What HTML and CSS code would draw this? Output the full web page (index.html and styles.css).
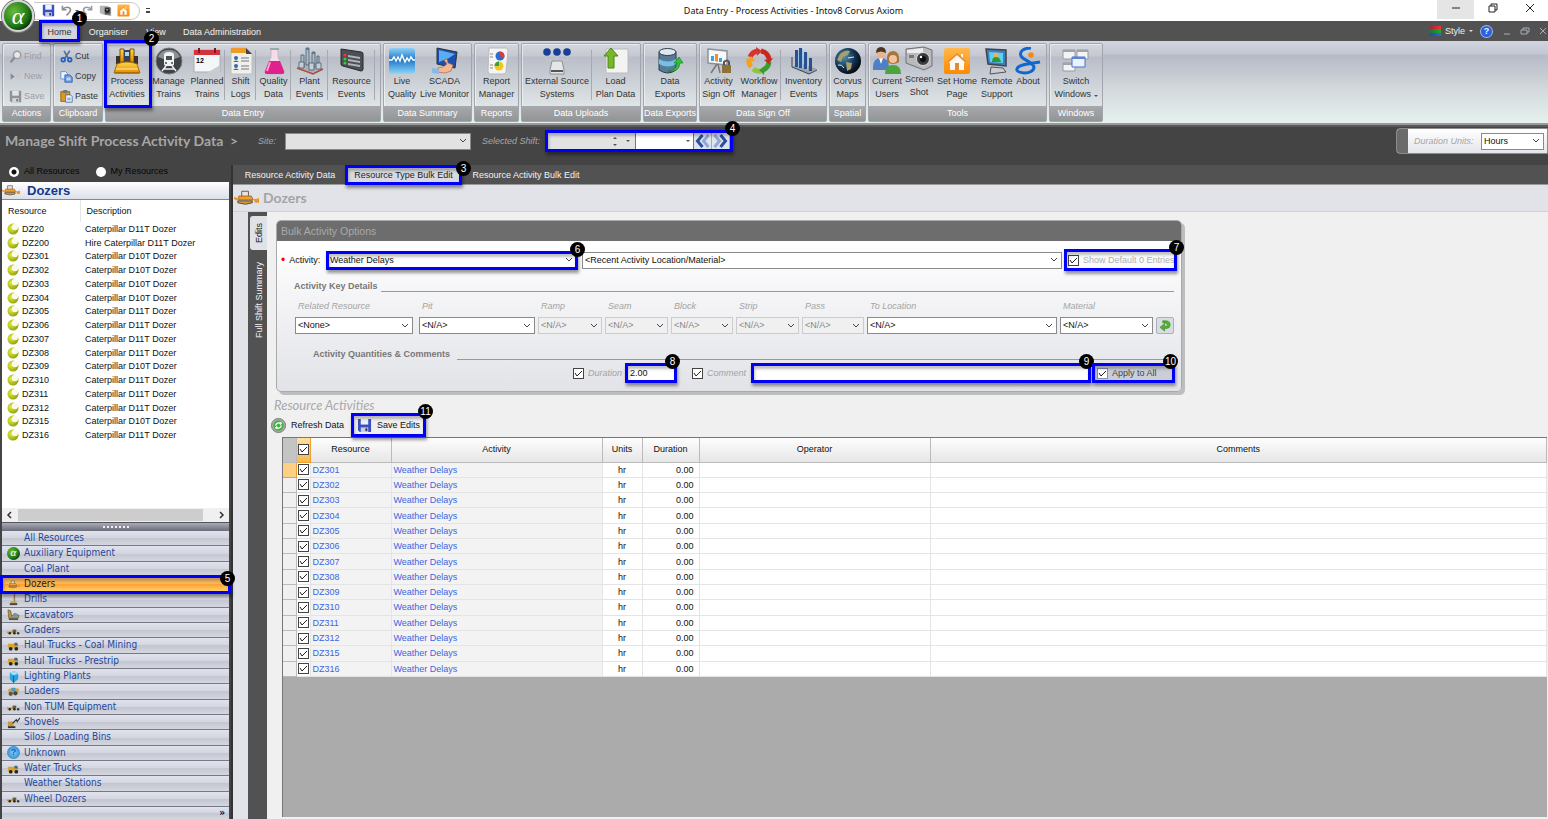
FILE: index.html
```html
<!DOCTYPE html>
<html lang="en">
<head>
    <meta charset="UTF-8">
    <meta name="viewport" content="width=device-width, initial-scale=1.0">
    <title>Data Entry - Process Activities - Intov8 Corvus Axiom</title>
    <link rel="stylesheet" href="styles.css">
</head>
<body>

<svg class="defs" width="0" height="0" aria-hidden="true">
    <defs>
        <linearGradient id="gold" x1="0" y1="0" x2="0" y2="1"><stop offset="0" stop-color="#ffd84a"/><stop offset="1" stop-color="#e58a00"/></linearGradient>
        <linearGradient id="sky" x1="0" y1="0" x2="0" y2="1"><stop offset="0" stop-color="#8fd0f5"/><stop offset=".45" stop-color="#1e78c8"/><stop offset="1" stop-color="#8fd6f8"/></linearGradient>
        <linearGradient id="orange" x1="0" y1="0" x2="0" y2="1"><stop offset="0" stop-color="#ffb84d"/><stop offset="1" stop-color="#ff8a00"/></linearGradient>
        <radialGradient id="lime" cx=".35" cy=".4" r=".8"><stop offset="0" stop-color="#e6ec3c"/><stop offset="1" stop-color="#7f9400"/></radialGradient>
        <radialGradient id="earth" cx=".35" cy=".35" r=".7"><stop offset="0" stop-color="#4b90b8"/><stop offset=".6" stop-color="#12304f"/><stop offset="1" stop-color="#05080d"/></radialGradient>
    </defs>
    <symbol id="i-floppy" viewBox="0 0 16 16"><path d="M1 1h14v14H3l-2-2z" fill="#3c4fc0"/><path d="M4 1h8v6H4z" fill="#eef2ff"/><path d="M4 10h8v5H4z" fill="#c9cfe0"/><path d="M9 11h2v3H9z" fill="#25306f"/></symbol>
    <symbol id="i-floppygrey" viewBox="0 0 16 16"><path d="M1 1h14v14H3l-2-2z" fill="#8f9297"/><path d="M4 1h8v6H4z" fill="#e2e4e8"/><path d="M4 10h8v5H4z" fill="#d4d6d9"/><path d="M9 11h2v3H9z" fill="#777"/></symbol>
    <symbol id="i-undo" viewBox="0 0 16 16"><path d="M3 2v5h5M3 7c3-4 9-4 10 0 0 3-3 5-5 7" fill="none" stroke="#8c8c92" stroke-width="2"/></symbol>
    <symbol id="i-redo" viewBox="0 0 16 16"><path d="M13 2v5H8M13 7C10 3 4 3 3 7c0 3 2 4 4 6" fill="none" stroke="#9a9aa0" stroke-width="2"/></symbol>
    <symbol id="i-shot" viewBox="0 0 16 16"><path d="M1 2h9l5 3v10L5 13 1 11z" fill="#b5b5b5"/><path d="M7 4h7v9H7z" fill="#5a5a5a"/><circle cx="10" cy="8" r="3" fill="#222"/><circle cx="10" cy="7" r="1" fill="#ddd"/></symbol>
    <symbol id="i-home" viewBox="0 0 28 28"><rect x="1" y="1" width="26" height="26" rx="2" fill="url(#orange)"/><path d="M6 15l8-7 8 7-1 1v7H7v-7z" fill="#fff8ee"/><path d="M5 15l9-8 9 8" fill="none" stroke="#e88a3a" stroke-width="1.5"/><path d="M18 7h2v4l-2-2z" fill="#fff"/><path d="M12 16h4v7h-4z" fill="#d88c44"/></symbol>
    <symbol id="i-find" viewBox="0 0 16 16"><circle cx="10" cy="6" r="4.5" fill="#e8e8ea" stroke="#9c9ea4" stroke-width="2"/><path d="M7 9l-5 6" stroke="#8a8c92" stroke-width="3"/></symbol>
    <symbol id="i-new" viewBox="0 0 16 16"><path d="M2 4l5 4-5 4z" fill="#8a8c92"/><path d="M9 6h5M9 9h5" stroke="#c4c6ca" stroke-width="2"/></symbol>
    <symbol id="i-cut" viewBox="0 0 16 16"><path d="M5 1l5 9M12 1L6 10" stroke="#4d6f9e" stroke-width="2"/><circle cx="4" cy="12" r="2.3" fill="none" stroke="#1f5fc0" stroke-width="2"/><circle cx="12" cy="12" r="2.3" fill="none" stroke="#1f5fc0" stroke-width="2"/></symbol>
    <symbol id="i-copy" viewBox="0 0 16 16"><path d="M1 2h6l2 2v7H1z" fill="#eaf2ff" stroke="#5a86c8"/><path d="M6 6h6l3 3v6H6z" fill="#6d9fe6" stroke="#2a5cae"/><path d="M8 10h5M8 12h5" stroke="#fff"/></symbol>
    <symbol id="i-paste" viewBox="0 0 16 16"><path d="M1 2h11v12H1z" fill="#d99a1f" stroke="#8a5a0a"/><path d="M4 0h5v4H4z" fill="#777"/><path d="M7 6h6l2 2v7H7z" fill="#eef4ff" stroke="#3a66aa"/><path d="M9 10h4M9 12h4" stroke="#4a7ac0"/></symbol>
    <symbol id="i-process" viewBox="0 0 28 28"><path d="M7 2h4v13H7zM17 2h4v13h-4z" fill="url(#gold)" stroke="#7a5200"/><path d="M11 3h6v12h-6z" fill="#33435b"/><path d="M12 5h4v4h-4z" fill="#b3d5ef"/><path d="M3 9h4v8H3zM21 9h4v8h-4z" fill="#3a3226"/><path d="M4 17q10-4 20 0l3 9H1z" fill="url(#gold)" stroke="#a96e00"/><path d="M3 22h22" stroke="#fff0a0"/><path d="M2 26h24" stroke="#9c5b00"/></symbol>
    <symbol id="i-train" viewBox="0 0 28 28"><circle cx="14" cy="14" r="13" fill="#3f4246" stroke="#777b80"/><path d="M3 10a12 12 0 0 1 22 0q-11 5-22 0z" fill="#8c9196"/><path d="M9 8q0-3 5-3t5 3v9q0 2-2 2h-6q-2 0-2-2z" fill="#f2f2f2"/><path d="M11 9h6v4h-6z" fill="#4b4e52"/><circle cx="11" cy="16" r="1" fill="#444"/><circle cx="17" cy="16" r="1" fill="#444"/><path d="M11 19l-4 5M17 19l4 5M9 22h10" stroke="#eee" stroke-width="1.5"/></symbol>
    <symbol id="i-log" viewBox="0 0 28 28"><path d="M4 1h15l6 6v20H4z" fill="#f2f0ea" stroke="#c0beb8"/><path d="M4 1h15v5H4z" fill="#f09a28"/><path d="M19 1l6 6h-6z" fill="#444"/><circle cx="9" cy="11" r="2" fill="#2e6ca8"/><circle cx="9" cy="19" r="2" fill="#2e6ca8"/><path d="M6 15q3-3 6 0zM6 23q3-3 6 0z" fill="#2e6ca8"/><path d="M14 11h8M14 14h8M14 19h8M14 22h8" stroke="#9aa0a8" stroke-width="1.5"/></symbol>
    <symbol id="i-flask" viewBox="0 0 28 28"><path d="M11 2h7v8l6 14q1 3-2 3H7q-3 0-2-3l6-14z" fill="#f6dcea" stroke="#c6b6c4"/><path d="M9 14h11l4 10q1 3-2 3H7q-3 0-2-3z" fill="#e0208c"/><path d="M10 15l-3 9" stroke="#ff9cd2" stroke-width="2"/><path d="M10 2h9" stroke="#9aa" stroke-width="2"/></symbol>
    <symbol id="i-plant" viewBox="0 0 28 28"><path d="M1 20l10-5 16 7-10 5z" fill="#a9b0b6"/><path d="M5 8h3v12H5zM10 1h3v17h-3zM16 5h3v15h-3zM21 9h2v12h-2z" fill="#a9bccb" stroke="#4b5a68" stroke-width=".8"/><path d="M10 1h3v2h-3zM16 5h3v2h-3z" fill="#5c7894"/><path d="M3 15h5v6H3zM13 16h5v7h-5zM20 16h5v6h-5z" fill="#c3d0da" stroke="#4b5a68" stroke-width=".8"/><path d="M1 21l16 6 10-5" fill="none" stroke="#b5483a" stroke-width="1.5"/></symbol>
    <symbol id="i-resource" viewBox="0 0 28 28"><path d="M3 2l20 3q2 0 2 2v15q0 2-2 2L5 19q-2 0-2-2z" fill="#4c4f54" stroke="#26282b"/><path d="M10 8l12 2v2l-12-2zM10 12l12 2v2l-12-2zM10 16l12 2v2l-12-2z" fill="#b0b4ba"/><circle cx="7" cy="8" r="1.6" fill="#e33"/><circle cx="7" cy="12" r="1.6" fill="#3c3"/><circle cx="7" cy="16" r="1.6" fill="#3c3"/></symbol>
    <symbol id="i-live" viewBox="0 0 28 28"><rect x="1" y="1" width="26" height="26" rx="3" fill="url(#sky)"/><path d="M1 13h3l2-3 2 4 2-4 2 4 2-6 3 7 2-4 2 3 2-4 2 3h2" fill="none" stroke="#fff" stroke-width="1.4"/></symbol>
    <symbol id="i-scada" viewBox="0 0 28 28"><path d="M6 1l20 4-2 16-18-4z" fill="#1c4fae" stroke="#333"/><path d="M8 3l16 4-6 4-10 4z" fill="#58aef0"/><path d="M13 13l3-1 1 4 5 2-2 6-6 2-8-1 1-4 5-1 4-3z" fill="#f3b893" stroke="#b06a4a" stroke-width=".7"/><path d="M1 21l7 1v5l-7-1z" fill="#88b9e6"/></symbol>
    <symbol id="i-report" viewBox="0 0 28 28"><path d="M6 1h17q2 0 2 3l-2 21q0 2-3 2H7q-2 0-2-3z" fill="#f4f4f4" stroke="#b9b9b9"/><circle cx="17" cy="9" r="4.5" fill="#2a6cd0"/><path d="M17 9V4.5a4.5 4.5 0 0 1 4 6.5z" fill="#e23a2c"/><circle cx="16" cy="19" r="4.5" fill="#f3c620"/><path d="M16 19h-4.5a4.5 4.5 0 0 1 4.5-4.5z" fill="#35a33c"/><path d="M7 7h3M7 10h3M7 18h3M7 21h3" stroke="#888"/></symbol>
    <symbol id="i-external" viewBox="0 0 28 28"><g fill="#173f97"><circle cx="4" cy="5" r="3.8"/><circle cx="14" cy="5" r="3.8"/><circle cx="24" cy="5" r="3.8"/></g><path d="M3 10v3h22v-3M14 9v6" fill="none" stroke="#c4c7cc"/><path d="M9 14h10l2 9v4H7v-4z" fill="#e4e6e8" stroke="#8c9096"/><path d="M8 24h12" stroke="#555" stroke-width="2"/></symbol>
    <symbol id="i-load" viewBox="0 0 28 28"><path d="M4 2h22v24H4z" fill="#f3f3f3" stroke="#b9bcc0"/><path d="M9 1l7 8h-4v12H6V9H2z" fill="#76b82a" stroke="#4d8412"/></symbol>
    <symbol id="i-export" viewBox="0 0 28 28"><path d="M3 5v18q9 6 17 0V5z" fill="#557a9a" stroke="#2a3c4c"/><ellipse cx="11.5" cy="5" rx="8.5" ry="3.5" fill="#dfe7ee" stroke="#2a3c4c"/><path d="M3 12q9 5 17 0v5q-8 5-17 0z" fill="#79bfe4"/><path d="M12 24q8 0 9-8h-3l5-6 4 6h-3q-1 10-12 8z" fill="#2fbf3c" stroke="#137a20" stroke-width=".6"/></symbol>
    <symbol id="i-signoff" viewBox="0 0 28 28"><path d="M3 2l19 2v14L3 16z" fill="#f6f8fa" stroke="#8c9298" stroke-width="1.5"/><path d="M6 14V9h3v5zM14 15v-4h3v4z" fill="#3f9fe0"/><path d="M10 14V7h3v8z" fill="#ef8e2d"/><path d="M12 17l-6 9M13 17l2 9" stroke="#777" stroke-width="1.5"/><path d="M17 18h9v8h-9z" fill="#8c7238"/><path d="M19 18v-3q3-3 5 0v3" fill="none" stroke="#555" stroke-width="2"/></symbol>
    <symbol id="i-workflow" viewBox="0 0 28 28"><g fill="none" stroke-width="5"><path d="M5 10a10 10 0 0 1 8-6" stroke="#d8342a"/><path d="M16 4a10 10 0 0 1 8 8" stroke="#c8281e"/><path d="M24 15a10 10 0 0 1-6 8" stroke="#3b9c2f"/><path d="M16 24a10 10 0 0 1-8-2" stroke="#8cc63e"/><path d="M6 20a10 10 0 0 1-2-8" stroke="#f5a11c"/></g><path d="M11 0l6 4-5 5z" fill="#d8342a"/><path d="M28 11l-4 6-5-4z" fill="#c8281e"/><path d="M20 19l-1 9-5-5z" fill="#3b9c2f"/><path d="M1 15l5-6 4 5z" fill="#f5a11c"/></symbol>
    <symbol id="i-inventory" viewBox="0 0 28 28"><path d="M2 20l8-4 17 6-8 5z" fill="#9aa3ad"/><path d="M5 3h3v17H5zM9 1h3v20H9zM14 5h3v17h-3zM19 11h3v13h-3z" fill="#29508f"/><path d="M8 4h1v16H8zM12 2h1v19h-1zM17 6h1v17h-1z" fill="#9ec4ec"/><path d="M2 10v10l17 7 8-4" fill="none" stroke="#3c444c"/></symbol>
    <symbol id="i-earth" viewBox="0 0 28 28"><circle cx="14" cy="14" r="13" fill="url(#earth)"/><path d="M6 7q5-5 10-3l-2 4-5 2-2 5-4-2zM12 15l6 1-1 6-4 2z" fill="#a89f6c"/><path d="M4 18q4-1 6 3M14 11l6-1" stroke="#dfe8ee" fill="none"/></symbol>
    <symbol id="i-users" viewBox="0 0 28 28"><path d="M0 20q0-9 8-9t8 9v3H0z" fill="#4f7fc4"/><path d="M6 11l2 6 2-6z" fill="#fff"/><circle cx="8" cy="7" r="4.5" fill="#e8b48c"/><path d="M3 6q0-6 5-6t5 6q-5-3-10 0z" fill="#4a3424"/><path d="M12 27q0-9 8-9t8 9z" fill="#49a53c"/><path d="M14 15q-1-11 6-11t6 11q-6 4-12 0z" fill="#a8743c"/><circle cx="20" cy="12" r="4" fill="#f0c49c"/></symbol>
    <symbol id="i-camera" viewBox="0 0 28 28"><path d="M1 4l18-2 8 3v16l-8 4-18-7z" fill="#b8babd" stroke="#6e7073"/><path d="M2 5l16-2v5L2 8z" fill="#eceded"/><circle cx="18" cy="14" r="6.5" fill="#3a3c3f" stroke="#ddd"/><circle cx="18" cy="14" r="3" fill="#0c0c0c"/><circle cx="16" cy="12" r="1.2" fill="#fff"/><path d="M4 10h5v3H4z" fill="#777"/></symbol>
    <symbol id="i-remote" viewBox="0 0 28 28"><path d="M4 2l20 1v16L6 17z" fill="#3b7fc4" stroke="#444" stroke-width="1.5"/><path d="M7 5l14 1v10L8 15z" fill="#5fd0f0"/><circle cx="14" cy="8" r="2.5" fill="#e8b060"/><path d="M10 15q0-5 4-5t5 5z" fill="#2f9a2a"/><path d="M9 20l12 1 3 4-16 2z" fill="#c9ccd0" stroke="#555"/></symbol>
    <symbol id="i-about" viewBox="0 0 28 28"><path d="M17 1C10 1 5 4 7 9c2 4 12 6 13 11 0 4-5 6-9 6-5 0-9-2-8-4 1-5 13-5 23-7" fill="none" stroke="#1267cf" stroke-width="3"/><circle cx="17" cy="8" r="2.8" fill="#f08a1a"/></symbol>
    <symbol id="i-windows" viewBox="0 0 28 28"><path d="M1 3h12v9H1zM15 3h11v9H15zM1 16h12v8H1z" fill="#f3f4f6" stroke="#989ba2"/><path d="M1 3h12v2H1zM15 3h11v2H15zM1 16h12v2H1z" fill="#a0a3a9"/><path d="M10 10h13v10H10z" fill="#eaf2ff" stroke="#4a74c4"/><path d="M10 10h13v2H10z" fill="#5a84d4"/></symbol>
    <symbol id="i-dozer" viewBox="0 0 26 16"><path d="M8 1h7v6H8z" fill="#e4e4e4" stroke="#6a5a48"/><path d="M5 6h13l2 4H5z" fill="#f0a030" stroke="#a86a18"/><path d="M4 11h15v2q-7 3-15 0z" fill="#d8963a" stroke="#5c5040"/><path d="M0 7l4 1v3l-4-2zM20 9h3l3-1v5h-4z" fill="#e8962a"/></symbol>
    <symbol id="i-ball" viewBox="0 0 12 12"><circle cx="6" cy="6" r="5.5" fill="url(#lime)"/><circle cx="8" cy="4" r="3.2" fill="#fff" opacity=".9"/></symbol>
    <symbol id="i-vehicle" viewBox="0 0 14 14"><path d="M1 5h8l3 2v3H1z" fill="#dba52a"/><path d="M8 4h3l1 3H8z" fill="#3d6a8a"/><circle cx="4" cy="10.5" r="2" fill="#222"/><circle cx="10" cy="10.5" r="2" fill="#222"/></symbol>
    <symbol id="i-flat" viewBox="0 0 14 14"><path d="M0 8h9v2H0z" fill="#c89a38"/><path d="M6 6h4v3H6z" fill="#6a5a36"/><circle cx="3" cy="10" r="1.3" fill="#222"/><circle cx="8" cy="10" r="1.3" fill="#222"/><circle cx="12" cy="10" r="1.3" fill="#333"/></symbol>
    <symbol id="i-digger" viewBox="0 0 14 14"><path d="M1 2l3 1 1 6 3-3 5 2-1 3H2z" fill="#b9964a" stroke="#5e5030" stroke-width=".7"/><path d="M7 6h4v3H7z" fill="#5a9ac0"/><path d="M2 11h10v2H2z" fill="#555"/></symbol>
    <symbol id="i-loader" viewBox="0 0 14 14"><path d="M1 5l4-2 8 1-1 5H2z" fill="#d0a438"/><path d="M5 3h4v4H5z" fill="#4a9ac8"/><circle cx="4" cy="9.500" r="2.300" fill="#555"/><circle cx="9" cy="9" r="2.300" fill="#444"/></symbol>
    <symbol id="i-shovel" viewBox="0 0 14 14"><path d="M1 6h6v5H1z" fill="#c89a38"/><path d="M6 8l4-4 1 2 3-4" fill="none" stroke="#333" stroke-width="1.3"/><path d="M1 11h8v2H1z" fill="#333"/></symbol>
    <symbol id="i-drill" viewBox="0 0 14 14"><path d="M8 0v10" stroke="#a08058" stroke-width="1.5"/><path d="M4 9h6l1 3H3z" fill="#c8a060"/><path d="M3 12h8" stroke="#444" stroke-width="2"/></symbol>
    <symbol id="i-cube" viewBox="0 0 14 14"><path d="M3 3l5-2 4 3v6l-5 4-4-4z" fill="#2aa0dc"/><path d="M3 3l5-2 4 3-5 2z" fill="#9ee0fa"/><path d="M7 6v8" stroke="#0d5e94"/></symbol>
    <symbol id="i-refresh" viewBox="0 0 16 16"><circle cx="8" cy="8" r="7.5" fill="#a9aba9" stroke="#777"/><circle cx="8" cy="8" r="5.5" fill="#48b048"/><path d="M5 8a3 3 0 0 1 5-2M11 8a3 3 0 0 1-5 2" fill="none" stroke="#eaffea" stroke-width="1.5"/><path d="M9 4l3 1-2 3zM7 12l-3-1 2-3z" fill="#eaffea"/></symbol>
    <symbol id="i-return" viewBox="0 0 14 14"><path d="M4 2q8-1 8 4t-6 4v3L1 9l5-4v3q4 0 3-2t-5-2z" fill="#4fb52c" stroke="#2f7d18" stroke-width=".6"/></symbol>
</svg>

<div class="app">
    <header class="titlebar">
        <button class="orb" aria-label="Application menu">α</button>
        <div class="quick">
            <button aria-label="Save"><svg><use href="#i-floppy"/></svg></button>
            <button aria-label="Undo"><svg><use href="#i-undo"/></svg></button>
            <i class="caret"></i>
            <button aria-label="Redo"><svg><use href="#i-redo"/></svg></button>
            <button aria-label="Screen shot"><svg><use href="#i-shot"/></svg></button>
            <button aria-label="Home page"><svg><use href="#i-home"/></svg></button>
        </div>
        <span class="more"></span>
        <h1>Data Entry - Process Activities - Intov8 Corvus Axiom</h1>
        <div class="window-buttons">
            <button class="min" aria-label="Minimise"><svg viewBox="0 0 10 10"><path d="M1 5h8"/></svg></button>
            <button aria-label="Restore"><svg viewBox="0 0 10 10"><path d="M1 3h6v6H1zM3 3V1h6v6H7"/></svg></button>
            <button aria-label="Close"><svg viewBox="0 0 10 10"><path d="M1 1l8 8M9 1L1 9"/></svg></button>
        </div>
    </header>

    <nav class="menubar">
        <a class="home marked" href="#">Home<b class="mark"><i>1</i></b></a>
        <a class="organiser" href="#">Organiser</a>
        <a class="view" href="#">View</a>
        <a class="admin" href="#">Data Administration</a>
        <div class="menu-right">
            <span class="swatch"></span><button>Style</button><i class="caret"></i>
            <button class="help" aria-label="Help">?</button>
            <svg viewBox="0 0 10 10"><path d="M2 8h6"/></svg>
            <svg viewBox="0 0 10 10"><path d="M1 4h6v4H1zM3 4V2h6v4H7"/></svg>
            <svg viewBox="0 0 10 10"><path d="M2 2l6 6M8 2L2 8"/></svg>
        </div>
    </nav>

    <div class="ribbon">
        <section class="group actions">
            <div class="stack off">
                <button disabled><svg><use href="#i-find"/></svg>Find</button>
                <button disabled><svg><use href="#i-new"/></svg>New</button>
                <button disabled><svg><use href="#i-floppygrey"/></svg>Save</button>
            </div>
            <h2>Actions</h2>
        </section>
        <section class="group clipboard">
            <div class="stack">
                <button><svg><use href="#i-cut"/></svg>Cut</button>
                <button><svg><use href="#i-copy"/></svg>Copy</button>
                <button><svg><use href="#i-paste"/></svg>Paste</button>
            </div>
            <h2>Clipboard</h2>
        </section>
        <section class="group entry">
            <div class="tools">
                <button class="marked"><svg><use href="#i-process"/></svg>Process<br>Activities<b class="mark"><i>2</i></b></button>
                <button><svg><use href="#i-train"/></svg>Manage<br>Trains</button>
                <button class="sep"><svg viewBox="0 0 28 28"><path d="M1 3h26v22H1z" fill="#f5f6f8" stroke="#a9adb3"/><path d="M1 3h26v5H1z" fill="#d5333c"/><path d="M6 1v5M22 1v5" stroke="#7c1820" stroke-width="2"/><path d="M27 18v8H14z" fill="#c9ccd2"/><text x="3" y="16" font-size="7" font-weight="700">12</text></svg>Planned<br>Trains</button>
                <button class="sep"><svg><use href="#i-log"/></svg>Shift<br>Logs</button>
                <button class="sep"><svg><use href="#i-flask"/></svg>Quality<br>Data</button>
                <button class="sep"><svg><use href="#i-plant"/></svg>Plant<br>Events</button>
                <button class="sep"><svg><use href="#i-resource"/></svg>Resource<br>Events</button>
            </div>
            <h2>Data Entry</h2>
        </section>
        <section class="group summary">
            <div class="tools">
                <button><svg><use href="#i-live"/></svg>Live<br>Quality</button>
                <button><svg><use href="#i-scada"/></svg>SCADA<br>Live Monitor</button>
            </div>
            <h2>Data Summary</h2>
        </section>
        <section class="group reports">
            <div class="tools"><button><svg><use href="#i-report"/></svg>Report<br>Manager</button></div>
            <h2>Reports</h2>
        </section>
        <section class="group uploads">
            <div class="tools">
                <button class="sep"><svg><use href="#i-external"/></svg>External Source<br>Systems</button>
                <button><svg><use href="#i-load"/></svg>Load<br>Plan Data</button>
            </div>
            <h2>Data Uploads</h2>
        </section>
        <section class="group exports">
            <div class="tools"><button><svg><use href="#i-export"/></svg>Data<br>Exports</button></div>
            <h2>Data Exports</h2>
        </section>
        <section class="group signoff">
            <div class="tools">
                <button><svg><use href="#i-signoff"/></svg>Activity<br>Sign Off</button>
                <button class="sep"><svg><use href="#i-workflow"/></svg>Workflow<br>Manager</button>
                <button><svg><use href="#i-inventory"/></svg>Inventory<br>Events</button>
            </div>
            <h2>Data Sign Off</h2>
        </section>
        <section class="group spatial">
            <div class="tools"><button><svg><use href="#i-earth"/></svg>Corvus<br>Maps</button></div>
            <h2>Spatial</h2>
        </section>
        <section class="group toolset">
            <div class="tools">
                <button><svg><use href="#i-users"/></svg>Current<br>Users</button>
                <button class="screen"><svg><use href="#i-camera"/></svg>Screen<br>Shot</button>
                <button><svg><use href="#i-home"/></svg>Set Home<br>Page</button>
                <button><svg><use href="#i-remote"/></svg>Remote<br>Support</button>
                <button><svg><use href="#i-about"/></svg>About<br>&nbsp;</button>
            </div>
            <h2>Tools</h2>
        </section>
        <section class="group windows">
            <div class="tools"><button><svg><use href="#i-windows"/></svg>Switch<br>Windows <i class="caret"></i></button></div>
            <h2>Windows</h2>
        </section>
    </div>

    <div class="filterbar">
        <h2>Manage Shift Process Activity Data &nbsp;&gt;</h2>
        <label for="site">Site:</label>
        <select id="site" class="site"><option></option></select>
        <label for="shift-date">Selected Shift:</label>
        <div class="shift marked">
            <input id="shift-date" type="text">
            <span class="spin"><i class="caret up"></i><i class="caret"></i></span>
            <span class="drop"><i class="caret"></i></span>
            <input class="shift-name" type="text" aria-label="Shift">
            <span class="drop white"><i class="caret"></i></span>
            <button aria-label="Previous shift"><svg viewBox="0 0 16 16"><path d="M8 2L3 8l5 6" stroke="#2a4f9e"/><path d="M14 2L9 8l5 6" stroke="#8fa8d8"/></svg></button>
            <button aria-label="Next shift"><svg viewBox="0 0 16 16"><path d="M2 2l5 6-5 6" stroke="#8fa8d8"/><path d="M8 2l5 6-5 6" stroke="#2a4f9e"/></svg></button>
            <b class="mark"><i>4</i></b>
        </div>
        <div class="units">
            <span class="grip"></span>
            <label for="units">Duration Units:</label>
            <select id="units"><option>Hours</option></select>
        </div>
    </div>

    <div class="workspace">
        <aside class="sidebar">
            <div class="scope">
                <label><input type="radio" name="scope" checked>All Resources</label>
                <label><input type="radio" name="scope">My Resources</label>
            </div>
            <h2><svg><use href="#i-dozer"/></svg>Dozers</h2>
            <div class="list">
                <table>
                    <thead><tr><th>Resource</th><th>Description</th></tr></thead>
                    <tbody id="resource-list"></tbody>
                </table>
                <div class="scroll"><svg viewBox="0 0 8 8"><path d="M5 1L2 4l3 3"/></svg><span></span><svg viewBox="0 0 8 8"><path d="M3 1l3 3-3 3"/></svg></div>
            </div>
            <div class="splitter"></div>
            <nav class="categories" id="categories"></nav>
        </aside>

        <main class="main">
            <div class="tabs">
                <button>Resource Activity Data</button>
                <button class="active marked">Resource Type Bulk Edit<b class="mark"><i>3</i></b></button>
                <button>Resource Activity Bulk Edit</button>
            </div>
            <h2 class="heading"><svg><use href="#i-dozer"/></svg>Dozers</h2>
            <div class="body">
                <div class="side-tabs">
                    <button class="active">Edits</button>
                    <button>Full Shift Summary</button>
                </div>
                <div class="content">
                    <section class="options">
                        <h3>Bulk Activity Options</h3>
                        <div class="row activity-row">
                            <label for="activity"><em>•</em> Activity:</label>
                            <span class="field activity marked"><select id="activity"><option>Weather Delays</option></select><b class="mark"><i>6</i></b></span>
                            <select class="recent" aria-label="Recent activity"><option>&lt;Recent Activity Location/Material&gt;</option></select>
                            <label class="defaults marked"><input type="checkbox" checked>Show Default 0 Entries<b class="mark"><i>7</i></b></label>
                        </div>
                        <h4>Activity Key Details</h4>
                        <div class="keys">
                            <label>Related Resource<select><option>&lt;None&gt;</option></select></label>
                            <label>Pit<select><option>&lt;N/A&gt;</option></select></label>
                            <label>Ramp<select disabled><option>&lt;N/A&gt;</option></select></label>
                            <label>Seam<select disabled><option>&lt;N/A&gt;</option></select></label>
                            <label>Block<select disabled><option>&lt;N/A&gt;</option></select></label>
                            <label>Strip<select disabled><option>&lt;N/A&gt;</option></select></label>
                            <label>Pass<select disabled><option>&lt;N/A&gt;</option></select></label>
                            <label>To Location<select><option>&lt;N/A&gt;</option></select></label>
                            <label>Material<select><option>&lt;N/A&gt;</option></select></label>
                            <button aria-label="Reset"><svg><use href="#i-return"/></svg></button>
                        </div>
                        <h4 class="quantities">Activity Quantities &amp; Comments</h4>
                        <div class="row quantity-row">
                            <label><input type="checkbox" checked>Duration</label>
                            <span class="field duration marked"><input type="text" value="2.00" aria-label="Duration"><b class="mark"><i>8</i></b></span>
                            <label><input type="checkbox" checked>Comment</label>
                            <span class="field comment marked"><input type="text" aria-label="Comment"><b class="mark"><i>9</i></b></span>
                            <label class="apply marked"><input type="checkbox" checked>Apply to All<b class="mark"><i>10</i></b></label>
                        </div>
                    </section>

                    <h3 class="activities-title">Resource Activities</h3>
                    <div class="grid-tools">
                        <button><svg><use href="#i-refresh"/></svg>Refresh Data</button>
                        <button class="save marked"><svg><use href="#i-floppy"/></svg>Save Edits<b class="mark"><i>11</i></b></button>
                    </div>
                    <div class="grid">
                        <table>
                            <thead>
                                <tr>
                                    <th class="c-row"></th>
                                    <th class="c-check"><input type="checkbox" checked aria-label="Select all"></th>
                                    <th class="c-resource">Resource</th>
                                    <th class="c-activity">Activity</th>
                                    <th class="c-units">Units</th>
                                    <th class="c-duration">Duration</th>
                                    <th class="c-operator">Operator</th>
                                    <th>Comments</th>
                                </tr>
                            </thead>
                            <tbody id="activity-rows"></tbody>
                        </table>
                    </div>
                </div>
            </div>
        </main>
    </div>
</div>

<script src="script.js"></script>
</body>
</html>
```
FILE: styles.css
```css
* {
    box-sizing: border-box;
}

body {
    margin: 0;
    font-family: "Liberation Sans", Arial, sans-serif;
    font-size: 9px;
    line-height: 13px;
    color: #111;
    background: #f0f0f0;
}

h1, h2, h3, h4 {
    margin: 0;
    font-weight: normal;
}

button, input, select {
    font: inherit;
    color: inherit;
    margin: 0;
    padding: 0;
    border: 0;
    border-radius: 0;
    background: none;
}

a {
    color: inherit;
    text-decoration: none;
}

.defs {
    position: absolute;
}

.app {
    display: flex;
    flex-direction: column;
    height: 100vh;
    overflow: hidden;
}

.caret {
    display: inline-block;
    border: 2px solid transparent;
    border-top-color: #555;
    border-bottom: 0;
}

.caret.up {
    border-top: 0;
    border-bottom: 2px solid #555;
}

/* numbered callouts */
.marked {
    position: relative;
}

.mark {
    position: absolute;
    inset: -1px;
    z-index: 5;
    border: 3px solid #0000fa;
    box-shadow: 1px 3px 3px rgba(0, 0, 0, 0.4), inset 1px 3px 3px rgba(0, 0, 0, 0.25);
    pointer-events: none;
}

.mark i {
    position: absolute;
    top: -12px;
    right: -10px;
    width: 15px;
    height: 15px;
    border-radius: 50%;
    background: #000;
    color: #fff;
    font: 10px/15px "Liberation Sans", Arial, sans-serif;
    text-align: center;
}

/* title bar */
.titlebar {
    display: flex;
    align-items: center;
    flex: none;
    height: 21px;
    background: #fff;
}

.orb {
    position: relative;
    z-index: 3;
    align-self: flex-start;
    flex: none;
    width: 32px;
    height: 32px;
    margin-left: 2px;
    border: 2px solid #d4d4d4;
    border-radius: 50%;
    background: radial-gradient(circle at 35% 35%, #6dbb3c, #1f7a18 55%, #0a2a08 80%);
    box-shadow: 0 0 0 1px #777;
    color: #fff;
    font: italic 24px/22px "Liberation Serif", serif;
}

.quick {
    display: flex;
    align-items: center;
    gap: 5px;
    height: 18px;
    padding: 0 9px 0 8px;
    border: 1px solid #c8c8c8;
    border-left: 0;
    border-radius: 0 9px 9px 0;
}

.quick button, .quick svg {
    display: block;
    width: 13px;
    height: 13px;
}

.quick .caret {
    margin: 0 -3px;
}

.more {
    width: 4px;
    height: 5px;
    margin-left: 6px;
    border-top: 1px solid #444;
    border-bottom: 2px solid #444;
}

.titlebar h1 {
    flex: 1;
    font: 9px/13px "Noto Sans", sans-serif;
    text-align: center;
}

.window-buttons {
    display: flex;
    align-self: stretch;
}

.window-buttons button {
    width: 37px;
    height: 19px;
}

.window-buttons .min {
    background: #e5e5e5;
}

.window-buttons svg {
    width: 10px;
    height: 10px;
    fill: none;
    stroke: #222;
}

/* menu */
.menubar {
    display: flex;
    flex: none;
    height: 20px;
    padding-left: 40px;
    line-height: 22px;
    color: #f2f2f2;
    background: #525252;
}

.menubar a {
    text-align: center;
}

.menubar .home {
    width: 39px;
    color: #333;
    background: #d3d6df;
}

.menubar .organiser {
    width: 59px;
}

.menubar .view {
    width: 36px;
}

.menubar .admin {
    width: 96px;
}

.menu-right {
    display: flex;
    align-items: center;
    gap: 4px;
    margin-left: auto;
}

.menu-right .swatch {
    width: 11px;
    height: 10px;
    background: linear-gradient(90deg, rgba(0, 0, 80, 0.3), transparent), linear-gradient(#e33 33%, #2a2 33%, #2a2 66%, #36d 66%);
}

.menu-right .caret {
    border-top-color: #ddd;
}

.menu-right .help {
    width: 11px;
    height: 11px;
    margin: 0 6px 0 4px;
    border-radius: 50%;
    background: #2b62dd;
    box-shadow: 0 0 0 1px #9db8f0;
    font-weight: bold;
    line-height: 11px;
}

.menu-right svg {
    width: 10px;
    height: 10px;
    margin-right: 4px;
    fill: none;
    stroke: #a5adbb;
}

.menu-right svg:last-child {
    margin-right: 0;
}

/* ribbon */
.ribbon {
    display: flex;
    flex: none;
    gap: 2px;
    height: 86px;
    padding: 2px 2px 3px;
    background: linear-gradient(#d2d5df, #c3c7d2 13px, #b5bac7 14px, #d5dadd 50px, #e4f0ee 80px);
    border-bottom: 2px solid #5a5a5a;
    box-shadow: inset 0 -2px #9a9a9a;
}

.group {
    display: flex;
    flex-direction: column;
    border: 1px solid #a2a5ab;
    border-radius: 2px;
    box-shadow: inset 1px 1px rgba(255, 255, 255, 0.5);
    background: linear-gradient(#d5d7de, #c5c8d0 12px, #b9bdc8 13px, #dfe5e6 62px);
    color: #333;
}

.group h2 {
    margin-top: auto;
    font-size: 9px;
    line-height: 15px;
    text-align: center;
    white-space: nowrap;
    color: #fff;
    background: linear-gradient(#a7a9ac, #929496);
}

.actions { width: 49px; }
.clipboard { width: 50px; }
.entry { width: 276px; }
.summary { width: 89px; }
.reports { width: 45px; }
.uploads { width: 120px; }
.exports { width: 54px; }
.signoff { width: 128px; }
.spatial { width: 37px; }
.toolset { width: 179px; }
.windows { width: 54px; }

.tools {
    display: grid;
    grid-template-columns: 1fr;
    height: 60px;
}

.entry .tools { grid-template-columns: 42px 41px 36px 31px 35px 37px 47px; }
.summary .tools { grid-template-columns: 36px 49px; }
.uploads .tools { grid-template-columns: 70px 47px; }
.signoff .tools { grid-template-columns: 37px 44px 45px; }
.toolset .tools { grid-template-columns: 36px 28px 48px 30px 34px; }

.tools button {
    line-height: 13px;
    text-align: center;
    white-space: nowrap;
}

.tools svg {
    display: block;
    width: 28px;
    height: 28px;
    margin: 0 auto;
}

.tools .screen {
    padding-bottom: 4px;
}

.tools .sep {
    background: linear-gradient(#a6a9b0, #a6a9b0) right 6px / 1px 50px no-repeat;
}

.entry .mark {
    inset: -4px -4px -4px -2px;
}

.stack {
    display: flex;
    flex-direction: column;
    padding: 2px 0 0 6px;
}

.stack button {
    display: flex;
    align-items: center;
    gap: 2px;
    height: 20px;
}

.stack svg {
    width: 13px;
    height: 13px;
}

.stack.off {
    color: #9c9ea3;
}

/* filter bar */
.filterbar {
    display: flex;
    align-items: center;
    flex: none;
    height: 38px;
    padding: 0 0 10px 5px;
    color: #a6a6a6;
    background: #444;
}

.filterbar h2 {
    width: 253px;
    font: bold 14px/18px Lato, sans-serif;
    white-space: nowrap;
}

.filterbar label {
    font-style: italic;
    white-space: nowrap;
}

.filterbar .site {
    width: 186px;
    margin: 0 11px 0 9px;
    background-color: #e2e2e2;
}

select {
    appearance: none;
    height: 17px;
    padding: 0 16px 0 2px;
    border: 1px solid #8a8a8a;
    color: #111;
    background: #fff url("data:image/svg+xml,%3Csvg xmlns='http://www.w3.org/2000/svg' width='8' height='6'%3E%3Cpath d='M1 1l3 3 3-3' fill='none' stroke='%23444'/%3E%3C/svg%3E") right 3px center no-repeat;
}

select:disabled {
    color: #888;
    border-color: #ccc;
    background-color: #f0f0f0;
    opacity: 1;
}

.shift {
    display: flex;
    width: 186px;
    height: 20px;
    margin-left: 6px;
    padding: 2px;
    background: #e2e2e2;
}

.shift input {
    width: 62px;
    min-width: 0;
}

.shift .spin {
    display: flex;
    flex-direction: column;
    align-items: center;
    justify-content: center;
    gap: 5px;
    width: 10px;
}

.shift .drop {
    display: flex;
    align-items: center;
    justify-content: center;
    width: 16px;
    border-right: 1px solid #777;
}

.shift .shift-name {
    width: 46px;
    background: #fff;
}

.shift .white {
    width: 12px;
    background: #fff;
}

.shift button {
    width: 18px;
    border-right: 1px solid #aaa;
    background: #dfe3ea;
}

.shift svg {
    display: block;
    width: 17px;
    height: 16px;
    fill: none;
    stroke-width: 3;
}

.units {
    display: flex;
    align-items: center;
    gap: 10px;
    height: 26px;
    margin-left: auto;
    padding-right: 3px;
    border: 1px solid #8c8c8c;
    border-radius: 4px 0 0 4px;
    background: linear-gradient(#fff, #e4e5ea);
    overflow: hidden;
}

.units .grip {
    align-self: stretch;
    width: 11px;
    margin-right: -4px;
    background: #6b6b6b;
}

.units label {
    width: 57px;
}

.units select {
    width: 63px;
}

/* sidebar */
.workspace {
    display: flex;
    flex: 1;
    min-height: 0;
    background: #444;
}

.sidebar {
    display: flex;
    flex-direction: column;
    flex: none;
    width: 233px;
    padding: 0 2px;
    border-right: 2px solid #333;
}

.scope {
    display: flex;
    align-items: center;
    flex: none;
    gap: 16px;
    height: 17px;
    padding: 0 0 4px 7px;
    color: #050505;
}

.scope label {
    display: flex;
    align-items: center;
    gap: 5px;
}

.scope input {
    appearance: none;
    width: 10px;
    height: 10px;
    border-radius: 50%;
    background: #fff;
}

.scope input:checked {
    background: radial-gradient(circle, #111 2px, #fff 3px);
}

.sidebar h2 {
    display: flex;
    align-items: center;
    flex: none;
    gap: 7px;
    height: 18px;
    font: bold 13px/18px "Liberation Sans", Arial, sans-serif;
    color: #12388c;
    background: linear-gradient(#fff, #dcdfe9);
    border-bottom: 1px solid #888;
}

.sidebar h2 svg {
    width: 18px;
    height: 11px;
}

.list {
    display: flex;
    flex-direction: column;
    justify-content: space-between;
    flex: none;
    height: 322px;
    background: #fff;
}

.list table {
    width: 100%;
    height: 242px;
    border-collapse: collapse;
}

.list th {
    height: 22px;
    padding: 0 0 0 6px;
    font-weight: normal;
    text-align: left;
}

.list th:first-child {
    width: 78px;
    border-right: 1px solid #e5e5e5;
}

.list td {
    padding: 0 0 0 5px;
    line-height: 12px;
}

.list td svg {
    width: 12px;
    height: 12px;
    margin-right: 3px;
    vertical-align: top;
}

.scroll {
    display: flex;
    align-items: center;
    justify-content: space-between;
    height: 14px;
    padding: 0 4px;
    background: #f0f0f0;
}

.scroll svg {
    width: 8px;
    height: 8px;
    fill: none;
    stroke: #333;
    stroke-width: 1.5;
}

.scroll span {
    flex: 1;
    height: 12px;
    margin: 0 14px 0 4px;
    background: #cdcdcd;
}

.splitter {
    flex: none;
    height: 9px;
    border-top: 1px solid #555;
    background: linear-gradient(#a9abb8, #6b6c7b);
}

.splitter::after {
    content: "";
    display: block;
    width: 26px;
    margin: 3px auto 0;
    border-top: 2px dotted #f0f0f0;
}

.categories {
    display: grid;
    grid-template-rows: repeat(18, 1fr) 12px;
    flex: 1;
    min-height: 0;
}

.categories a {
    display: flex;
    align-items: center;
    gap: 4px;
    min-height: 0;
    padding-left: 5px;
    border-bottom: 1px solid #777985;
    font: 10px/14px "DejaVu Sans Condensed", "Noto Sans", sans-serif;
    color: #1f479c;
    background: linear-gradient(#e0e2ec, #d3d6e0 50%, #c3c6d0 50%, #d4d7e0);
}

.categories svg, .round {
    flex: none;
    width: 13px;
    height: 13px;
}

.round {
    border-radius: 50%;
    background: radial-gradient(circle at 35% 35%, #6dbb3c, #1f7a18 55%, #0a2a08 80%);
    color: #fff;
    font: italic 11px/11px "Liberation Serif", serif;
    text-align: center;
}

.round.unknown {
    background: radial-gradient(circle, #8fd0f6, #2a8ad8 75%);
    color: #1560b0;
    font: bold 9px/13px "Liberation Sans", Arial, sans-serif;
}

.categories .active {
    color: #222;
    background: linear-gradient(#ffc874, #ffb552 50%, #fc9f2f 50%, #ffd06a);
}

.categories .active .mark {
    inset: -2px -2px -3px -2px;
}

.categories .mark i {
    right: -7px;
    top: -7px;
}

.categories .overflow {
    justify-content: flex-end;
    padding-right: 4px;
    border-bottom: 0;
    font-weight: bold;
    color: #111;
}

/* main area */
.main {
    display: flex;
    flex-direction: column;
    flex: 1;
    min-width: 0;
    background: #e1e3e8;
}

.tabs {
    display: flex;
    flex: none;
    gap: 9px;
    height: 20px;
    padding: 1px 0 0 10px;
    color: #f2f2f2;
    background: #525252;
    border-bottom: 1px solid #999;
}

.tabs button {
    width: 94px;
    white-space: nowrap;
}

.tabs .active {
    width: 115px;
    height: 18px;
    color: #222;
    background: #d8dae2;
}

.tabs .mark i {
    top: -7px;
    right: -12px;
}

.tabs button:last-child {
    width: 112px;
}

.heading {
    display: flex;
    align-items: center;
    flex: none;
    gap: 4px;
    height: 27px;
    padding-left: 1px;
    font: bold 14px/18px Lato, sans-serif;
    color: #a3a3a5;
    border-bottom: 1px solid #cfd1d6;
}

.heading svg {
    width: 25px;
    height: 16px;
}

.body {
    display: flex;
    flex: 1;
    min-height: 0;
    padding-left: 15px;
}

.side-tabs {
    display: flex;
    flex-direction: column;
    flex: none;
    width: 19px;
    padding: 4px 0 0 2px;
    color: #f2f2f2;
    background: #525252;
}

.side-tabs button {
    height: 100px;
    writing-mode: sideways-lr;
    text-align: center;
    line-height: 16px;
}

.side-tabs .active {
    height: 34px;
    color: #222;
    background: #e0e2e8;
    border-radius: 3px 0 0 3px;
}

.content {
    display: flex;
    flex-direction: column;
    flex: 1;
    min-width: 0;
    padding: 8px 1px 2px 7px;
    background: #f0f0f0;
}

.options {
    flex: none;
    max-width: 906px;
    height: 172px;
    margin-left: 2px;
    border: 1px solid #a9a9a9;
    border-radius: 5px;
    background: linear-gradient(#fff 20px, #e2e3e8);
    box-shadow: 3px 3px #bdbdbd;
}

.options h3 {
    height: 20px;
    padding-left: 4px;
    line-height: 20px;
    border-radius: 4px 4px 0 0;
    color: #a9a9a9;
    background: #6d6d6d;
}

.row {
    display: flex;
    align-items: center;
}

.row label {
    display: flex;
    align-items: center;
    gap: 4px;
    white-space: nowrap;
}

.field {
    display: flex;
}

.field select, .field input {
    width: 100%;
}

.activity-row {
    height: 22px;
    margin-top: 8px;
    padding-left: 4px;
}

.activity-row em {
    color: #f00;
    font-size: 12px;
    font-style: normal;
}

.activity-row > label:first-child {
    width: 46px;
}

.activity {
    width: 250px;
}

.recent {
    flex: 1;
    margin: 0 3px 0 5px;
}

.activity-row .defaults {
    width: 111px;
    height: 20px;
    padding-left: 3px;
    margin-right: 5px;
    color: #b0b0b0;
}

input[type=checkbox] {
    appearance: none;
    flex: none;
    width: 11px;
    height: 11px;
    border: 1px solid #444;
    background: #fff url("data:image/svg+xml,%3Csvg xmlns='http://www.w3.org/2000/svg' width='9' height='9'%3E%3Cpath d='M1 4l2 3 5-5' fill='none' stroke='%23222'/%3E%3C/svg%3E") center no-repeat;
}

.options h4 {
    display: flex;
    align-items: flex-end;
    gap: 3px;
    height: 20px;
    margin: 4px 7px 0 17px;
    font-weight: bold;
    line-height: 18px;
    color: #777;
}

.options h4::after {
    content: "";
    flex: 1;
    margin-bottom: 3px;
    border-top: 1px solid #999;
}

.keys {
    display: grid;
    grid-template-columns: 121px 116px 64px 63px 62px 63px 62px 1fr 93px 18px;
    gap: 3px;
    align-items: end;
    margin: 5px 7px 0 18px;
    font-style: italic;
    color: #a3a3a3;
}

.keys label {
    text-indent: 3px;
}

.keys select {
    display: block;
    width: 100%;
    margin-top: 4px;
    font-style: normal;
    text-indent: 0;
}

.keys label:first-child select {
    width: 118px;
}

.keys button {
    height: 17px;
    border: 1px solid #aab0b8;
    border-radius: 2px;
    background: #d9dce2;
}

.keys svg {
    display: block;
    width: 13px;
    height: 13px;
    margin: auto;
}

.options .quantities {
    gap: 7px;
    margin: 9px 7px 0 36px;
}

.quantity-row {
    justify-content: flex-end;
    height: 20px;
    padding-right: 7px;
    font-style: italic;
    color: #a3a3a3;
}

.quantity-row .field input {
    height: 18px;
    padding: 0 4px;
    background: #fff;
    color: #111;
}

.quantity-row .duration {
    width: 50px;
    margin: 0 16px 0 4px;
    font-style: normal;
}

.quantity-row .comment {
    width: 338px;
    margin: 0 3px 0 6px;
}

.quantity-row .apply {
    width: 81px;
    height: 18px;
    padding-left: 4px;
    font-style: normal;
    color: #444;
    background: #cbced6;
}

.quantity-row .comment i, .quantity-row .apply i, .quantity-row .duration i {
    right: -6px;
}

.apply input[type=checkbox] {
    border-color: #8890b0;
}

.activities-title {
    flex: none;
    margin-top: 6px;
    font: italic 13px/15px Lato, sans-serif;
    color: #a9a9a9;
}

.grid-tools {
    display: flex;
    align-items: center;
    flex: none;
    gap: 8px;
    height: 24px;
    padding-left: 2px;
    margin-left: -5px;
}

.grid-tools button {
    display: flex;
    align-items: center;
    gap: 5px;
}

.grid-tools svg {
    flex: none;
    width: 15px;
    height: 15px;
}

.grid-tools .save {
    width: 73px;
    height: 22px;
    padding-left: 5px;
    white-space: nowrap;
}

.grid {
    flex: 1;
    min-height: 0;
    margin-left: 8px;
    border-top: 1px solid #777;
    border-left: 1px solid #777;
    background: #ababab;
}

.grid table {
    width: 100%;
    height: 239px;
    table-layout: fixed;
    border-collapse: collapse;
}

.grid th {
    height: 24px;
    padding: 0;
    font-weight: normal;
    border-right: 1px solid #bbb;
    border-bottom: 1px solid #bbb;
    background: linear-gradient(#fdfdfd, #e6e6e6);
}

.c-row { width: 13px; }
.c-check { width: 14px; }
.c-resource { width: 81px; }
.c-activity { width: 211px; }
.c-units { width: 40px; }
.c-duration { width: 57px; }
.c-operator { width: 231px; }

.grid thead .c-row {
    background: #c4c4c4;
}

.grid thead .c-check {
    background: linear-gradient(#ffe0a0, #f9b84c);
    border-color: #f0a030;
}

.grid td {
    padding: 0 2px;
    line-height: 12px;
    border-right: 1px solid #e4e4e4;
    border-bottom: 1px solid #e4e4e4;
    background: #fff;
}

.grid td:nth-child(1) {
    background: #f0f0f0;
    border-color: #bbb;
}

.grid tr:first-child td:nth-child(1) {
    background: #ffcf85;
    border-color: #f0a030;
}

.grid td:nth-child(2) {
    padding: 0 1px;
}

.grid input {
    display: block;
    margin: 0 auto;
}

.grid td:nth-child(3), .grid td:nth-child(4) {
    color: #4065e0;
    background: #f3f3f3;
}

.grid td:nth-child(5) {
    text-align: center;
}

.grid td:nth-child(6) {
    padding-right: 5px;
    text-align: right;
}
```
FILE: script.js
```js
var resources = ["DZ20", "DZ200", "DZ301", "DZ302", "DZ303", "DZ304", "DZ305", "DZ306",
    "DZ307", "DZ308", "DZ309", "DZ310", "DZ311", "DZ312", "DZ315", "DZ316"];
var smallDozers = ["DZ301", "DZ302", "DZ303", "DZ304", "DZ309", "DZ315"];

var categories = [
    ["All Resources", ""], ["Auxiliary Equipment", "alpha"], ["Coal Plant", ""], ["Dozers", "dozer"],
    ["Drills", "drill"], ["Excavators", "digger"], ["Graders", "flat"],
    ["Haul Trucks - Coal Mining", "vehicle"], ["Haul Trucks - Prestrip", "vehicle"],
    ["Lighting Plants", "cube"], ["Loaders", "loader"], ["Non TUM Equipment", "flat"],
    ["Shovels", "shovel"], ["Silos / Loading Bins", ""], ["Unknown", "unknown"],
    ["Water Trucks", "vehicle"], ["Weather Stations", ""], ["Wheel Dozers", "flat"]
];

function icon(name) {
    if (name === "alpha") return '<span class="round">α</span>';
    if (name === "unknown") return '<span class="round unknown">?</span>';
    return '<svg>' + (name ? '<use href="#i-' + name + '"/>' : '') + '</svg>';
}

document.getElementById("resource-list").innerHTML = resources.map(function(id) {
    var model = smallDozers.includes(id) ? "D10T" : "D11T";
    var prefix = id === "DZ200" ? "Hire " : "";
    return '<tr><td>' + icon("ball") + id + '</td><td>' + prefix + 'Caterpillar ' + model + ' Dozer</td></tr>';
}).join("");

document.getElementById("categories").innerHTML = categories.map(function(item) {
    var active = item[0] === "Dozers";
    return '<a href="#"' + (active ? ' class="active marked"' : '') + '>' + icon(item[1]) + item[0] +
        (active ? '<b class="mark"><i>5</i></b>' : '') + '</a>';
}).join("") + '<a href="#" class="overflow">»</a>';

// the first two dozers have no activities in this shift
document.getElementById("activity-rows").innerHTML = resources.slice(2).map(function(id) {
    return '<tr><td></td><td><input type="checkbox" checked aria-label="' + id + '"></td><td>' + id +
        '</td><td>Weather Delays</td><td>hr</td><td>0.00</td><td></td><td></td></tr>';
}).join("");
```
